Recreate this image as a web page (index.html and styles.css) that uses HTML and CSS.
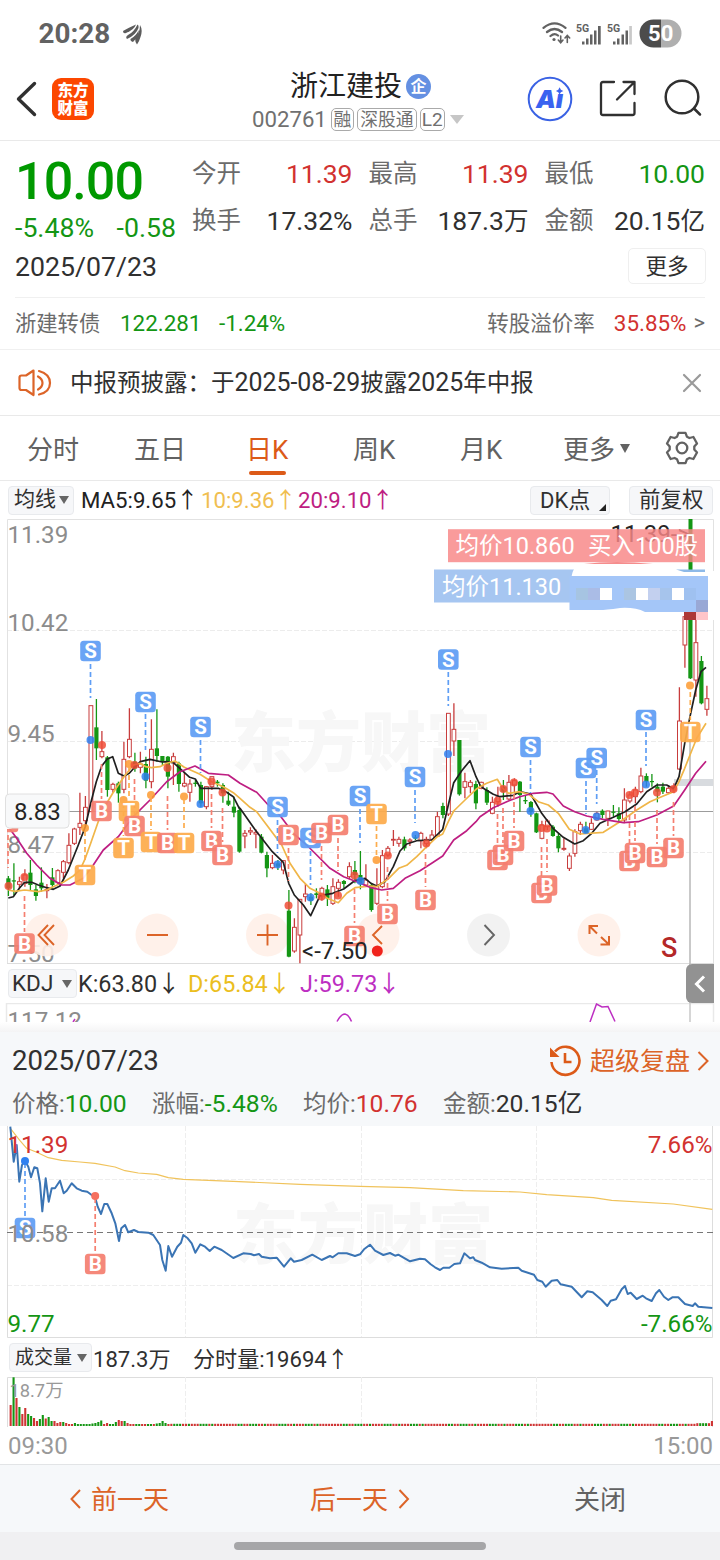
FILE: index.html
```html
<!DOCTYPE html>
<html lang="zh-CN">
<head>
<meta charset="utf-8">
<title>浙江建投 002761</title>
<link rel="stylesheet" href="styles.css">
</head>
<body>
<div class="status">
  <span class="clock">20:28</span>
  <svg class="status-logo" width="20" height="21" viewBox="0 0 20 21"><g fill="#5c5c5c"><path d="M0 7Q5 4 13 .500Q11 6 3 9Q0 10 0 7Z"/><path d="M4 15Q2 13 5 11Q11 8 14.500 .500Q16 1 15.500 4Q13 11 4 15Z"/><path d="M17 1Q20 6 17.500 13Q16 18 14 20.500Q12 18 12 14Q17 9 17 1Z"/><path d="M10 18Q7 17 7.500 15Q13 12 15.800 6Q16 12 10 18Z"/></g></svg>
  <svg class="signals" width="142" height="32" viewBox="540 18 142 32">
    <g fill="none" stroke="#626262" stroke-width="2.300" stroke-linecap="round"><path d="M543.500 27.800Q554.500 19 565.500 27.800M547 32Q554.500 26 562 32M550.500 36Q554.500 32.500 558 35.500"/><path d="M560.700 36V42M558.300 40L560.700 42.700L563 40M567.300 42.500V36M565 38L567.300 35.400L569.700 38" stroke-width="1.600"/></g>
    <circle cx="554" cy="39.500" r="1.600" fill="#626262"/>
    <g fill="#626262"><path d="M582 41.500h2.500v3H582zM586 38.500h2.500v6H586zM590 34.500h2.500v10H590zM594 30.500h2.500v14H594zM598 26h2.700v18.500H598zM613 41.500h2.500v3H613zM617 38.500h2.500v6H617zM621.500 34.500h2.500v10h-2.500zM625.500 30.500h2.500v14h-2.500z"/><path d="M629.200 26h2.700v18.500h-2.700z" fill="#c9c9c9"/></g>
    <g class="net"><text x="576" y="31.500">5G</text><text x="607" y="31.500">5G</text></g>
    <path d="M661 19.500H653.500a14 14 0 0 0 0 28H661z" fill="#4c4c4c"/><path d="M661 19.500H667.500a14 14 0 0 1 0 28H661z" fill="#afafaf"/>
    <text class="battery" x="660.700" y="41.300">50</text>
  </svg>
</div>

<header class="header">
  <svg class="back" width="24" height="36" viewBox="0 0 24 36"><path d="M20.500 2.500L4.500 18L20.500 33.500" fill="none" stroke="#303030" stroke-width="3.400" stroke-linecap="round" stroke-linejoin="round"/></svg>
  <div class="brand"><span>东方</span><span>财富</span></div>
  <div class="stock">
    <div class="stock-name">浙江建投<i class="qi">企</i></div>
    <div class="stock-code"><span>002761</span><b>融</b><b>深股通</b><b>L2</b><i class="caret"></i></div>
  </div>
  <svg class="ai" width="46" height="46" viewBox="0 0 46 46"><circle cx="23" cy="23" r="21.300" fill="none" stroke="#3a62e4" stroke-width="2"/><text x="9" y="32">Aı</text><path d="M32.600 11.200L33.900 13.800L36.300 15L33.900 16.200L32.600 18.600L31.300 16.200L28.900 15L31.300 13.800Z" fill="#3a62f0"/></svg>
  <svg class="share" width="38" height="38" viewBox="0 0 38 38"><g fill="none" stroke="#303030" stroke-width="2.300" stroke-linecap="round" stroke-linejoin="round"><path d="M15 2H4Q2 2 2 4V33Q2 35 4 35H33.500Q35.500 35 35.500 33V23"/><path d="M24.500 2H35.500V14M35.500 2L18 19.500"/></g></svg>
  <svg class="search" width="38" height="38" viewBox="0 0 38 38"><g fill="none" stroke="#303030" stroke-width="2.500" stroke-linecap="round"><circle cx="18" cy="18" r="16.300"/><path d="M30 29.500L36 35.500"/></g></svg>
</header>

<section class="quote">
  <div class="last">
    <div class="price">10.00</div>
    <div class="change"><span>-5.48%</span><span>-0.58</span></div>
  </div>
  <div class="stats">
    <span>今开</span><em class="up">11.39</em><span>最高</span><em class="up">11.39</em><span>最低</span><em class="down">10.00</em>
    <span>换手</span><em>17.32%</em><span>总手</span><em>187.3<b>万</b></em><span>金额</span><em>20.15<b>亿</b></em>
  </div>
  <div class="quote-date">2025/07/23</div>
  <button class="more">更多</button>
</section>

<section class="bond">
  <span class="bond-name">浙建转债</span><span class="bond-price down">122.281</span><span class="down">-1.24%</span>
  <span class="bond-rate">转股溢价率</span><span class="up">35.85%</span><span class="gt">&gt;</span>
</section>

<section class="notice">
  <svg width="34" height="30" viewBox="0 0 34 30"><g fill="none" stroke="#dc6428" stroke-width="2.200" stroke-linejoin="round" stroke-linecap="round"><path d="M15.500 2.500L8 7.500H3.500Q1.500 7.500 1.500 9.500V20Q1.500 22 3.500 22H8L15.500 27Z"/><path d="M20 8.500Q24.500 11 24.500 15Q24.500 19 20 21.500M21 3Q32 6 32 15Q32 24 21 26.500"/></g></svg>
  <p>中报预披露：于<b>2025-08-29</b>披露<b>2025</b>年中报</p>
  <svg class="close" width="20" height="20" viewBox="0 0 20 20"><path d="M2 2L18 18M18 2L2 18" stroke="#9a9a9a" stroke-width="2.200" stroke-linecap="round"/></svg>
</section>

<nav class="tabs">
  <span>分时</span><span>五日</span><span class="active">日K</span><span>周K</span><span>月K</span><span class="tab-more">更多<i></i></span>
  <svg class="gear" width="34" height="36" viewBox="-17 -18 34 36"><g fill="none" stroke="#626262" stroke-width="2.300" stroke-linejoin="round"><path d="M-3.500 -15.200H3.500L5 -11.200L7.400 -10L11.400 -11L15 -4.500L12.300 -1.400V1.400L15 4.500L11.400 11L7.400 10L5 11.200L3.500 15.200H-3.500L-5 11.200L-7.400 10L-11.400 11L-15 4.500L-12.300 1.400V-1.400L-15 -4.500L-11.400 -11L-7.400 -10L-5 -11.200Z"/><circle r="5.300"/></g></svg>
</nav>

<div class="ma-row">
  <span class="chip chip-ma">均线<i></i></span>
  <span class="ma5">MA5:9.65<i>↑</i></span><span class="ma10">10:9.36<i>↑</i></span><span class="ma20">20:9.10<i>↑</i></span>
  <span class="chip chip-dk">DK点<i></i></span>
  <span class="chip chip-fq">前复权</span>
</div>

<svg id="kline" width="720" height="445" viewBox="0 519 720 445"></svg>

<div class="kdj-row">
  <span class="chip chip-kdj">KDJ<i></i></span>
  <span class="k">K:63.80<i>↓</i></span><span class="d">D:65.84<i>↓</i></span><span class="j">J:59.73<i>↓</i></span>
  <span class="drawer"><svg width="14" height="20" viewBox="0 0 14 20"><path d="M11 2.500L3.500 10L11 17.500" fill="none" stroke="#fff" stroke-width="3"/></svg></span>
</div>
<svg class="kdj-chart" width="720" height="19" viewBox="0 1003 720 19">
  <path d="M6.500 1022V1003.500H713.500V1022" fill="none" stroke="#e9e9e9" stroke-width="1.500"/>
  <path d="M690 1003V1022" stroke="#c8c8c8" stroke-width="1.500"/>
  <text class="axis" x="7.500" y="1028.500">117.12</text>
  <path d="M73 1022L75 1019M337 1021.500Q341 1014 345 1014Q349 1015 351.500 1021.500M590 1022L596.500 1004L602 1007L608 1006.500L615 1021.500" fill="none" stroke="#bd2fc2" stroke-width="1.500"/>
</svg>
<div class="fade"></div>

<section class="day">
  <div class="day-head"><span class="day-date">2025/07/23</span>
    <svg width="34" height="34" viewBox="0 0 34 34"><path d="M3.500 18A14 14 0 1 0 7 7.500" fill="none" stroke="#dc5a18" stroke-width="2.600"/><path d="M2 3.500V13H11.500Z" fill="#dc5a18"/><path d="M17 9V18H23.500" fill="none" stroke="#dc5a18" stroke-width="2.600"/></svg>
    <span class="replay">超级复盘</span><svg width="14" height="22" viewBox="0 0 14 22"><path d="M2.500 2L11.500 11L2.500 20" fill="none" stroke="#dc6428" stroke-width="2"/></svg></div>
  <div class="day-stats"><span>价格:<em class="down">10.00</em></span><span>涨幅:<em class="down">-5.48%</em></span><span>均价:<em class="up">10.76</em></span><span>金额:<em>20.15亿</em></span></div>
</section>

<svg id="intraday" width="720" height="212" viewBox="0 1126 720 212"></svg>

<div class="vol-row"><span class="chip chip-vol">成交量<i></i></span><span class="vol-total">187.3万</span><span>分时量:19694<i>↑</i></span></div>
<svg id="volume" width="720" height="50" viewBox="0 1377 720 50"></svg>
<div class="hours"><span>09:30</span><span>15:00</span></div>

<nav class="pager">
  <span class="prev"><svg width="14" height="22" viewBox="0 0 14 22"><path d="M11 2L2.500 11L11 20" fill="none" stroke="#dc6428" stroke-width="2"/></svg>前一天</span>
  <span class="next">后一天<svg width="14" height="22" viewBox="0 0 14 22"><path d="M2.500 2L11 11L2.500 20" fill="none" stroke="#dc6428" stroke-width="2"/></svg></span>
  <span class="shut">关闭</span>
</nav>
<div class="home"><i></i></div>
<script src="charts.js"></script>
</body>
</html>
```
FILE: styles.css
```css
* { box-sizing: border-box; }
body { margin: 0; width: 720px; height: 1560px; overflow: hidden; background: #fff; color: #303030; font-family: Roboto, "Noto Sans CJK SC", sans-serif; line-height: 1.2; }
svg { display: block; flex: none; }
em, i, b { font-style: normal; font-weight: 400; }
.up { color: #d23230; }
.down { color: #149614; }

.status { display: flex; align-items: center; height: 68px; padding: 0 38px; }
.clock { width: 85px; padding-left: .5px; font-size: 27.800px; font-weight: 700; color: #626262; }
.signals { margin-left: auto; }
.net { font-size: 10.500px; font-weight: 700; fill: #626262; }
.battery { font-size: 22px; font-weight: 700; fill: #fff; text-anchor: middle; }

.header { display: flex; height: 73px; padding-left: 14px; border-bottom: 1px solid #e9e9e9; }
.back { margin: 13px 14px 0 0; }
.brand { display: flex; flex-direction: column; width: 42px; height: 42px; margin-top: 10px; padding-top: 4px; border-radius: 9px; background: #fc4700; color: #fff; text-align: center; font-size: 15.500px; font-weight: 900; line-height: 18px; }
.stock { width: 216px; margin-left: 157px; text-align: center; }
.stock-name { display: flex; justify-content: flex-start; align-items: center; height: 36px; padding: 2px 0 0 39px; color: #222; font-size: 28px; white-space: nowrap; }
.qi { width: 25px; height: 25px; margin: -2px 0 0 4px; border-radius: 50%; background: #6490e2; color: #fff; font-size: 16px; font-weight: 700; line-height: 26px; }
.stock-code { display: flex; align-items: center; height: 31px; padding-left: 1px; color: #707070; font-size: 22.200px; white-space: nowrap; }
.stock-code span { width: 78.500px; text-align: left; }
.stock-code b { height: 23px; margin-right: 3px; padding: 0 2px; border: 1px solid #aaa; border-radius: 5px; font-size: 17.800px; line-height: 22px; }
.stock-code b:nth-of-type(3) { padding: 0 1px; font-size: 19px; }
.caret { margin-left: 2px; border: 7px solid transparent; border-top: 9px solid #c6c6c6; border-bottom: 0; }
.ai { margin: 8px 0 0 60px; }
.ai text { font-family: Inter, sans-serif; font-size: 25px; font-weight: 900; font-style: italic; fill: #3a62f0; }
.share { margin: 12px 0 0 26px; }
.search { margin: 11px 0 0 27px; }

.quote { display: grid; grid-template-columns: 177px 513px; grid-template-rows: 107px 48px; justify-content: start; height: 157px; margin: 0 15px; border-bottom: 1px solid #f0f0f0; }
.price { height: 70px; padding: 10px 0 0 0; color: #009900; font-size: 52px; font-weight: 500; line-height: 62px; letter-spacing: -.9px; }
.change { display: flex; width: 161px; height: 34px; justify-content: space-between; color: #149614; font-size: 26.700px; line-height: 34px; }
.stats { display: grid; grid-template-columns: 49px 111.500px 49px 127px 49px 127.500px; grid-template-rows: 47px 47px; padding-top: 9px; font-size: 26.500px; line-height: 47px; white-space: nowrap; }
.stats span { color: #6b6b6b; font-size: 24.500px; }
.stats em { text-align: right; }
.stats em b { font-size: 24.500px; }
.stats span:nth-child(6n+3), .stats span:nth-child(6n+5) { padding-left: 16px; }
.quote-date { font-size: 26.700px; line-height: 38px; }
.more { justify-self: end; width: 78px; height: 36px; margin: 0 -1px 0 0; padding: 0; border: 1.500px solid #efefef; border-radius: 5px; background: #fff; color: #303030; font: 21.500px/30px "Noto Sans CJK SC", sans-serif; padding-bottom: 2px; }

.bond { display: flex; align-items: center; height: 52px; padding: 0 15px; border-bottom: 1px solid #f0f0f0; font-size: 22.400px; white-space: nowrap; }
.bond-name { width: 105px; color: #6b6b6b; font-size: 21.300px; }
.bond-price { width: 99px; }
.bond-rate { margin: 0 19px 0 auto; color: #6b6b6b; font-size: 21.500px; }
.gt { margin-left: 7px; color: #6b6b6b; font-size: 22px; }

.notice { display: flex; align-items: center; height: 66px; padding: 0 18px; border-bottom: 1px solid #e9e9e9; }
.notice p { margin: 0 0 0 18px; font-size: 23.500px; white-space: nowrap; }
.notice b { font-size: 24.900px; }
.close { margin-left: auto; }

.tabs { display: flex; height: 65px; padding-left: 27px; border-bottom: 1px solid #e9e9e9; color: #626262; font-size: 26px; line-height: 69px; }
.tabs span { position: relative; width: 107px; height: 65px; white-space: nowrap; }
.tabs .active { padding-left: 5px; color: #dc5a18; }
.tabs .active::after { content: ""; position: absolute; left: 8px; top: 55px; width: 37px; height: 4px; border-radius: 2px; background: #dc5a18; }
.tabs span:nth-child(4) { padding-left: 5px; }
.tabs span:nth-child(5) { padding-left: 5px; }
.tabs .tab-more { width: 103px; display: flex; align-items: center; padding: 3px 0 0 1px; }
.tab-more i { margin: -4px 0 0 5px; border: 5px solid transparent; border-top: 9px solid #626262; border-bottom: 0; }
.gear { margin: 14px 0 0 0; }

.chip { display: flex; align-items: center; height: 29px; border: 1px solid #e8eaed; border-radius: 4px; background: #f6f7f9; color: #303030; white-space: nowrap; }
.chip i { border: 5px solid transparent; border-top: 8px solid #666; border-bottom: 0; }
.ma-row { display: flex; align-items: center; height: 38px; padding: 0 8px; font-size: 22.200px; white-space: nowrap; color: #222; }
.ma-row span i, .kdj-row span i, .vol-row span i { font-family: "Noto Sans CJK SC", sans-serif; line-height: 0; }
.chip-ma { width: 66px; padding-left: 5px; font-size: 21px; }
.chip-ma i { margin-left: 3px; }
.ma5 { width: 120px; margin-left: 7px; }
.ma10 { width: 97px; color: #f0be50; }
.ma20 { color: #be1e82; }
.chip-dk { position: relative; width: 80px; margin-left: auto; padding: 2px 0 0 9px; font-size: 22px; }
.chip-dk i { position: absolute; right: 3px; bottom: 3px; border: 0; border-left: 7px solid transparent; border-bottom: 7px solid #222; }
.chip-fq { width: 84px; margin: 0 -1px 0 19px; padding-left: 9px; font-size: 21.500px; }

.kdj-row { position: relative; display: flex; align-items: center; height: 39px; padding-left: 8px; font-size: 23.400px; white-space: nowrap; background: linear-gradient(#c8c8c8, #c8c8c8) 689px 0 / 1.500px 39px no-repeat; }
.kdj-row > span { padding-top: 1px; }
.kdj-row .chip-kdj { width: 69px; padding: 0 0 0 3px; font-size: 22.500px; }
.chip-kdj i { margin-left: 9px; }
.k { width: 110px; margin-left: 1px; }
.d { width: 112px; color: #ebbe1e; }
.j { color: #bd2fc2; }
.drawer { position: absolute; left: 686px; top: 0; display: flex; align-items: center; justify-content: center; width: 28px; height: 39px; border-radius: 6px 0 0 6px; background: #929292; }
.fade { height: 10px; background: linear-gradient(#fff, #f4f4f5); }

.day { height: 94px; padding: 0 10px 0 12px; background: #f6f8fa; white-space: nowrap; }
.day-head { display: flex; align-items: center; height: 57px; color: #303030; }
.day-date { margin-right: auto; font-size: 27.600px; }
.replay { margin: 2px 6px 0 8px; color: #dc6428; font-size: 25px; }
.day-stats { display: grid; grid-template-columns: 140px 151px 140px auto; color: #6b6b6b; line-height: 30px; }
.day-stats span { font-size: 23.500px; }
.day-stats em { font-size: 24.700px; }
.day-stats em:not([class]) { color: #303030; }

.vol-row { display: flex; align-items: center; height: 39px; padding-left: 9px; font-size: 22.100px; white-space: nowrap; }
.vol-row > span { padding-top: 3px; }
.vol-row .chip-vol { width: 83px; padding: 1px 0 0 5px; font-size: 19px; }
.chip-vol i { margin-left: 5px; }
.vol-total { width: 101px; padding-left: 1px; }
.hours { display: flex; justify-content: space-between; height: 37px; padding: 0 7px 0 8px; color: #999; font-size: 24px; line-height: 38px; }

.pager { display: flex; height: 68px; border-top: 1px solid #e2e4e6; background: #f6f8fa; color: #dc6428; font-size: 26px; line-height: 1.2; }
.pager span { display: flex; align-items: center; width: 240px; padding-top: 5px; }
.pager svg { margin-top: -5px; }
.pager .prev { padding-left: 69px; gap: 8px; }
.pager .next { padding-left: 70px; gap: 9px; }
.pager .shut { padding-left: 94px; color: #626262; }
.home { display: flex; justify-content: center; height: 29px; padding-top: 10px; background: #f0f0f2; }
.home i { width: 252px; height: 8px; border-radius: 4px; background: #a6a6a8; }

.axis { font-size: 24.200px; fill: #8c8c8c; }
.dark { font-size: 24px; fill: #252525; }
.tip { font-size: 23.500px; fill: #fff; }
.mark { font-size: 20.500px; font-weight: 700; fill: #fff; text-anchor: middle; }
.watermark { font-size: 65px; font-weight: 900; fill: #f7f7f7; font-family: "Noto Sans CJK SC", sans-serif; }
.sell { font-size: 27px; font-weight: 500; fill: #b42828; }
.axis-up { font-size: 24.200px; fill: #d23230; }
.axis-down { font-size: 24.200px; fill: #149614; }
.end { text-anchor: end; }
.vol-max { font-size: 18.300px; fill: #999; }
```
FILE: charts.js
```js
const RED = '#c83c3c', GREEN = '#149614';
const COLORS = { S: '#5f9ef5', B: '#f57f70', T: '#fdac4c' };
const dashes = 'stroke-dasharray="5 3"';
const text = (cls, x, y, s) => `<text class="${cls}" x="${x}" y="${y}">${s}</text>`;
const rect = (x, y, w, h, fill, extra = '') => `<rect x="${x}" y="${y}" width="${w}" height="${h}" fill="${fill}" ${extra}/>`;
const line = (d, stroke, w = 1, extra = '') => `<path d="${d}" fill="none" stroke="${stroke}" stroke-width="${w}" ${extra}/>`;

// Plot segments: [x origin, y origin, "x,y x,y ..."] on a grid of thirds of a pixel.
const points = segs => segs.flatMap(([ox, oy, s]) => s.split(' ').map(p => {
  const [x, y] = p.split(',').map(Number);
  return [ox + x / 3, oy + y / 3];
}));
const curve = (segs, color, w) => `<polyline points="${points(segs).map(p => p[0].toFixed(1) + ',' + p[1].toFixed(1)).join(' ')}" fill="none" stroke="${color}" stroke-width="${w}" stroke-linejoin="round"/>`;
const badge = (c, x, y) => `<g opacity=".93">${rect(x - 10.3, y - 10.3, 20.6, 20.6, COLORS[c], 'rx="3.500"')}${text('mark', x, y + 7.2, c)}</g>`;

// Candles: color, high, body top, body bottom, low. Group origin 630 or 600.
const A = `g738,745,775,798 g700,751,754,795 r740,755,763,778 r718,735,760,770 g690,728,765,780 g765,778,798,812 g712,758,775,785 r762,778,782,805 g714,742,765,775 r718,722,758,762 r690,695,727,745 r610,646,698,703 r593,597,640,645 r488,580,592,615 r498,532,572,590 r227,227,545,545 g207,292,355,390 r303,365,380,385 g378,382,480,500 r458,463,478,488 g455,460,490,518 r335,388,478,490 r235,328,380,385 g368,395,415,425 r365,402,412,430 g380,402,452,475 r268,358,455,475 g238,355,378,395 g378,378,395,405 g378,380,440,475 r368,380,398,465 g395,400,462,485 r425,460,468,472 r448,462,487,515 g450,458,462,470 g455,465,520,530 r468,470,530,538 r440,440,470,480 g450,455,460,470 g460,465,490,518 g485,512,524,528 g500,530,548,562 g530,540,665,668 r600,610,618,655 r592,602,606,615 r598,607,612,655 g612,620,668,670 g665,675,715,742 r675,700,713,718 g690,700,710,720 r690,692,720,733 g780,842,980,982 r865,892,963,968 r808,808,915,1000 r762,792,800,815 g790,800,812,825 g775,790,795,805 r770,775,797,812 g765,778,805,828 r745,770,820,825 r748,757,775,800 g750,753,762,775 r697,710,740,748 g693,720,735,760 g663,735,760,778 r703,750,765,770 g760,765,840,845 r715,770,820,825 r660,677,770,775 r648,655,675,680 r600,628,630,648 r620,628,640,650 g620,628,655,662 r625,630,634,648 g615,622,625,630 r605,610,632,655 r620,628,640,655 r600,615,628,632 r545,560,618,620 g518,528,555,565 r250,250,552,558 r220,298,333,378 g330,330,493,497 r428,455,472,505 r450,457,470,490 g452,462,520,538`;
const B = `r545,547,565,568 g562,570,608,615 r590,607,640,643 r560,590,605,620 g540,560,575,600 r525,547,597,600 r535,542,555,580 g543,545,585,635 g585,600,604,612 g603,606,635,650 g638,640,697,699 r662,675,715,718 r658,663,680,690 g675,680,708,710 g700,708,745,757 r715,745,748,752 r760,768,805,813 r688,695,760,770 r665,673,692,705 g665,685,698,702 r655,670,688,690 r635,640,660,662 g628,632,645,655 r632,633,655,678 g615,635,638,650 g622,640,657,663 r565,600,660,670 r575,585,603,610 r560,570,590,610 r503,528,575,580 g520,528,545,560 g522,543,546,560 g550,560,575,607 g548,560,575,582 r555,565,578,582 r550,560,570,580 r262,363,507,510 r50,50,135,203 g40,40,235,237 r50,128,240,290 g168,183,310,313 r257,296,328,347`;
function candles(src, first, oy) {
  return src.split(' ').map((s, k) => {
    const [h, t, b, l] = s.slice(1).split(',').map(v => oy + v / 3);
    const x = 8.4 + 5.5 * (first + k);
    if (s[0] === 'g') return line(`M${x} ${h}V${l}`, GREEN, 1.3) + rect(x - 2.1, t, 4.2, Math.max(b - t, 1.2), GREEN);
    return line(`M${x} ${h}V${t}M${x} ${b}V${l}`, RED, 1.3) + rect(x - 1.9, t, 3.8, Math.max(b - t, .8), '#fff', `stroke="${RED}" stroke-width="1"`);
  }).join('');
}

const ma5 = [
  [0, 630, '25,804 40,800 58,775 74,757 95,757 115,765 140,773 160,778 180,768 205,720 235,645 256,590 272,520 289,455 305,408 322,387 338,380 355,430 372,438 388,430 404,412 421,395 450,388 487,396 500,395 520,398 536,412 569,442 586,447 602,475 655,475 680,487 700,500 718,535'],
  [240, 630, '0,535 46,600 97,665 130,697 146,760 163,795 190,825 212,857 240,797 278,790 311,777 344,752 375,745 393,760 410,768 435,755 460,710 480,663 500,642 530,632 575,630 608,598 625,525 641,458 665,422 690,392 708,440'],
  [480, 600, '0,555 10,565 40,583 60,590 100,586 119,575 152,582 185,640 219,685 250,712 284,732 310,722 335,700 360,670 400,652 435,635 470,612 500,575 531,555 560,555 581,566 597,530 614,430 630,350 647,270 663,215 678,202']];
const ma10 = [
  [0, 630, '25,780 45,784 74,780 115,785 140,780 160,770 190,757 220,738 240,720 256,685 272,640 305,545 338,490 372,440 400,405 421,400 437,410 454,413 480,410 500,400 525,393 553,412 600,433 635,455 670,470 700,488'],
  [240, 630, '0,505 30,532 50,545 80,585 125,645 150,700 180,745 210,775 240,790 262,805 295,818 320,790 345,773 393,768 410,770 443,748 476,715 500,706 530,680 560,650 592,620 608,612 625,575 641,543 675,510 708,478'],
  [480, 600, '0,560 20,550 52,538 68,565 86,580 119,575 145,582 175,605 205,615 235,640 268,688 300,702 370,697 420,665 470,630 510,605 550,588 581,575 597,545 614,505 630,465 650,415 678,370']];
const ma20 = [
  [0, 630, '25,590 50,625 80,670 110,705 150,745 185,765 210,765 250,745 280,705 310,660 355,620 400,560 450,510 500,455 540,425 585,408 625,430 685,435'],
  [240, 630, '0,460 50,487 80,520 115,550 160,610 200,645 230,675 270,715 311,740 350,755 393,773 425,780 460,775 495,745 540,722 575,700 608,678 641,630 680,602 708,575'],
  [480, 600, '0,650 40,623 80,605 119,590 160,580 200,577 219,582 250,618 284,635 320,648 370,658 430,668 475,665 530,645 581,618 614,570 647,520 678,484']];

// Trade marks: letter, x, badge y, dash start, dash end.
const marks = `B,8,822,835,868 S,90.5,651,664,698 S,145.5,702,714,750 S,200.5,727,740,773 S,277.5,807,820,853 S,360,796,809,843 S,415,777,790,823 S,448.3,659.5,672,706 S,310.5,838,851,885 S,530.5,747,760,793 S,586,768,781,814 S,596.7,758,770,804 S,646,720,732,766 B,101.5,811,764,799 T,129,811,767,799 B,134.5,826,779,814 T,123.5,848,803,836 T,85,875,831,863 T,151,842,797,830 B,167.5,843,796,830 T,184,843,799,831 B,211.5,841,794,828 B,222.5,855,808,842 B,24.5,943.5,896,932 B,288.5,835,848,881 B,321.5,833,846,880 B,338,825,838,871 T,376.5,814,826,856 B,387.5,914,867,901 B,354.5,936,889,923 B,425.5,900,854,887 B,497.5,860,814,848 B,503,855,808,843 B,514,841,794,828 B,541.5,893,847,880 B,547,885.5,839,872 B,629.5,861,815,848 B,635,853,806,841 B,657,857,810,844 B,673.5,848,802,836 T,690.3,732,692,720`.split(' ').map(s => s.split(','));
const dots = `B,8.5,886 B,24.5,877 T,85,828 S,90.5,740 B,102,745 T,129,764 B,134.5,765 S,145.5,776.5 T,123.5,800 T,151,795 B,167.5,768 T,184,796.5 S,200.5,804 B,211.5,781.5 B,222.5,792.5 S,277.5,864.5 B,288.5,905.5 S,310.5,897.5 B,321.5,896.5 B,338,895.500 B,354.5,875.5 S,360.5,881 T,376.5,860 B,387.8,855.500 S,415.5,835 B,426.3,843.5 S,448,754 B,497.5,801 B,503.3,789 B,514,782.500 S,530.5,811 B,541.500,828 B,547,828.500 S,585.7,830 S,596.7,816.5 B,629.5,795 B,635,792.500 S,646,784.500 B,657,792.500 B,673.5,789 T,690,685.5`.split(' ').map(s => s.split(','));

let k = '';
for (const y of [630.5, 741.5, 852.5]) k += line(`M7 ${y}H713`, '#ececec', 1, 'stroke-dasharray="5 2"');
k += text('watermark', 231, 766, '东方财富');
k += line('M7.500 963V519.500H713.500V571M713.500 620V963', '#e2e2e2') + line('M7 963.500H714', '#ddd');
for (const [y, s] of [[543, '11.39'], [631, '10.42'], [742, '9.45'], [853, '8.47'], [962, '7.50']]) k += text('axis', 7.5, y, s);
[46.5, 157, 267.5, 378, 488.5, 599].forEach((x, n) => { k += `<circle cx="${x}" cy="935" r="21.500" fill="${n === 4 ? '#f1f1f1' : '#fff0e8'}" opacity=".9"/>`; });
k += line('M48 925L38.500 935L48 945M54 925L44.500 935L54 945M147 935H168M257 935H278M267.500 924.500V945.500M382 926L373 935L382 944', '#dc6428', 1.900);
k += line('M484.500 925L494 935L484.500 945', '#666', 1.900);
k += line('M589.500 934V926H598M589.500 926L597 933.500M609 936V944.500H600.500M609 944.500L601 937', '#dc6428', 2);
k += rect(674, 779, 39, 7, '#d8dbdf');
k += line('M69 811.500H713', '#9c9c9c', 1.200) + line('M690 733V964', '#c0c0c0', 1.700);
k += candles(A, 0, 630) + candles(B, 86, 600);
k += curve(ma5, '#202020', 1.700) + curve(ma10, '#f0b648', 1.700) + curve(ma20, '#be1e82', 1.700);
for (const [c, x, y] of dots) k += `<circle cx="${x}" cy="${y}" r="4" fill="${{ S: '#2f80f0', B: '#f04e38', T: '#fd9a30' }[c]}" opacity=".85"/>`;
k += '<clipPath id="plot"><path d="M7 519H714V964H7Z"/></clipPath><g clip-path="url(#plot)">';
for (const [c, x, , a, b] of marks) k += line(`M${x} ${a}V${b}`, COLORS[c], 1.700, dashes);
for (const [c, x, y] of marks) k += badge(c, +x, +y);
k += '</g>';
k += rect(5.5, 794, 63.5, 34, '#f8f9fa', 'rx="4" stroke="#e0e0e0"') + text('dark', 14, 820, '8.83');
k += text('dark', 302, 958.500, '&lt;-7.50') + '<circle cx="377.300" cy="951" r="5.500" fill="#f0231c"/>' + text('sell', 661, 957, 'S');
// Average-cost banners and the masked amount.
k += text('dark', 610.5, 541.5, '11.39-&gt;') + rect(688.5, 519, 4, 53, GREEN);
k += rect(448, 529.2, 257, 33, '#f88787', 'opacity=".83"') + text('tip', 455.5, 554, '均价10.860') + text('tip', 588, 554, '买入100股');
k += '<path d="M584 564Q615 560 653 564Z" fill="#f58d8d"/>';
k += '<path d="M434 569.500H574Q570 574 570.500 602.500H434Z" fill="#a6c6f1"/><path d="M676 569.500H705V572H684Z" fill="#8db9e8"/>';
k += '<path d="M569.500 576H708V612H645Q635 607 620 608Q605 610 600 610H569.500Z" fill="#a4c6f8"/>';
k += text('tip', 442, 594.500, '均价11.130');
for (const [x, c] of [[576, '#a6c4e2'], [588, '#aabce6'], [600, '#fff'], [624, '#abc5e2'], [636, '#fff'], [648, '#c3d0ef'], [660, '#a6c4ec'], [672, '#fff'], [684, '#9fc1f0']]) k += rect(x, 588, 12, 12, c);
k += rect(696, 600, 12, 12, '#99a8d5') + rect(684, 612, 12, 8, '#ad3836') + rect(696, 612, 12, 8, '#ffc5c9');
document.getElementById('kline').innerHTML = k;

const price = [
  [0, 1020, '31,320 41,425 50,375 58,485 66,435 75,422 85,440 93,472 103,442 112,445 120,490 127,574 137,475 146,545 155,505 165,505 180,482 191,520 200,512 215,490 230,505 245,512 262,515 275,525 285,530 293,560 303,582 313,552 322,552 335,580 346,610 357,663 364,625 375,615 385,637 402,630 415,636 445,638 460,645 480,675 487,720 497,752 505,678 516,710 532,680 543,668 550,645 563,655 575,670 586,698 601,673 615,680 629,693 643,680 665,690 700,714 730,700 752,702 762,706 777,702 785,710 810,715 830,713 852,740 872,715 882,725 905,720 937,704 965,720 990,708 998,712 1015,700 1040,700 1065,708'],
  [360, 1020, '0,703 12,688 30,674 45,692 70,705 90,699 105,707 115,704 150,724 180,716 195,718 212,733 225,742 240,750 250,743 268,743 283,732 300,730 313,700 330,715 340,712 345,720 365,728 390,742 425,746 475,743 485,752 522,764 532,780 547,785 557,800 575,782 592,780 602,793 635,800 665,832 682,814 698,817 725,840 742,858 752,842 768,838 785,808 795,798 803,822 812,818 830,837 848,827 858,835 875,843 888,820 898,810 912,830 925,840 937,832 955,832 975,852 998,858 1005,850 1015,860 1057,864']];
const average = [
  [0, 1020, '31,325 60,362 80,385 110,397 145,413 185,421 240,426 285,430 345,441 375,452 415,459 470,463 505,473 550,478 700,484 900,493'],
  [360, 1020, '0,499 150,503 310,512 480,516 560,524 700,533 755,541 940,552 1057,568']];
let t = text('watermark', 233, 1258, '东方财富');
t += line('M7 1179.500H713M7 1285.500H713M185.500 1126V1338M361.500 1126V1338M536.500 1126V1338', '#eee', 1, 'stroke-dasharray="5 2"');
t += line('M7.500 1126V1337.500H712.500V1126', '#ddd') + line('M7 1232.500H713', '#777', 1, 'stroke-dasharray="6 4"');
t += curve(average, '#f0c35c', 1.200) + curve(price, '#3a74b4', 2);
t += line('M25 1163V1218', COLORS.S, 1.700, dashes) + line('M95.200 1198V1253', COLORS.B, 1.700, dashes);
t += '<circle cx="25" cy="1161" r="4" fill="#2f80f0"/><circle cx="95.200" cy="1196" r="4" fill="#f5705f"/>';
t += badge('S', 25, 1228) + badge('B', 95.2, 1264);
t += text('axis-up', 7.5, 1152.5, '11.39') + text('axis', 7.5, 1241.5, '10.58') + text('axis-down', 7.5, 1331.5, '9.77');
t += text('axis-up end', 712.5, 1152.5, '7.66%') + text('axis-down end', 712.5, 1331.5, '-7.66%');
document.getElementById('intraday').innerHTML = t;

const first = 'r21 g48.7 r28 g19 r12 r18 g12 g10 r8 r5 g7 g11 r7.5 g9 g5 r5 r3 r4 g4 r3 r2 r2 g3 g2 g2 g2 g2 g2 g2.500 g3 g4 g5.500 r2 r3 g2 g2 g4 r6 r5 g5 r3 r2 r2 g2 g2 r2 r2 g2 g2 r2 g2.500 g3 g5 g3 r2'.split(' ');
let v = line('M7.500 1427V1377.500H712.500V1427', '#ddd') + line('M185.500 1377V1427M361.500 1377V1427M536.500 1377V1427', '#eee', 1, 'stroke-dasharray="5 2"');
const tail = 'rrrrrrggrrgggrrgrrrrgggrrgrrrgggrgrr';
for (let n = 0; n <= 240; n++) {
  const bar = first[n] || tail[n % tail.length] + (n === 240 ? 5 : n > 234 ? 2.8 : 2.2);
  const h = parseFloat(bar.slice(1));
  v += rect((9.6 + 2.922 * n).toFixed(2), 1426 - h, 2.1, h, n === 240 || bar[0] === 'r' ? '#cf3434' : GREEN);
}
v += text('vol-max', 9.5, 1397, '18.7万');
document.getElementById('volume').innerHTML = v;
```
